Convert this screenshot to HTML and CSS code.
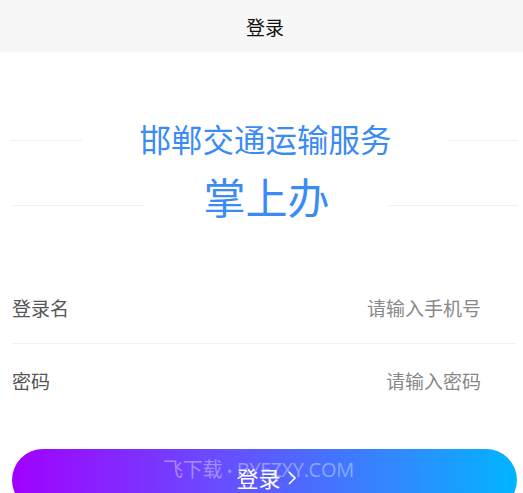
FILE: index.html
```html
<!DOCTYPE html>
<html lang="zh-CN">
<head>
<meta charset="utf-8">
<title>登录</title>
<link rel="stylesheet" href="styles.css">
</head>
<body>
<header class="topbar"><span class="topbar-title">登录</span></header>
<section class="brand">
  <div class="brand-row brand-row-1">
    <span class="deco deco-l1"></span>
    <h1 class="brand-title">邯郸交通运输服务</h1>
    <span class="deco deco-r1"></span>
  </div>
  <div class="brand-row brand-row-2">
    <span class="deco deco-l2"></span>
    <h2 class="brand-sub">掌上办</h2>
    <span class="deco deco-r2"></span>
  </div>
</section>
<form class="form">
  <div class="field field-first">
    <span class="label">登录名</span>
    <span class="placeholder">请输入手机号</span>
  </div>
  <div class="field">
    <span class="label">密码</span>
    <span class="placeholder">请输入密码</span>
  </div>
  <div class="btn-wrap">
    <span class="watermark">飞下载 <span class="dot">•</span> BYFZXY.COM</span>
    <button type="button" class="btn"><span class="btn-text">登录</span><svg class="chev" width="10" height="16" viewBox="0 0 10 16"><path d="M2 2 L8 8 L2 14" fill="none" stroke="#fff" stroke-width="1.6"/></svg></button>
  </div>
</form>
</body>
</html>
```
FILE: styles.css
```css
html, body {
  margin: 0;
  padding: 0;
  background: #ffffff;
  font-family: "Noto Sans CJK SC", "Noto Sans", sans-serif;
  overflow: hidden;
  height: 493px;
}
.topbar {
  height: 52px;
  background: #f7f7f7;
  display: flex;
  align-items: center;
  justify-content: center;
}
.topbar-title {
  font-size: 19px;
  color: #111;
  line-height: 1;
  margin-top: 1px;
  margin-left: 7px;
}
.brand {
  padding-top: 66px;
}
.brand-row {
  display: grid;
  grid-template-columns: 1fr auto 1fr;
  align-items: center;
}
.brand-row-2 {
  margin-top: 13px;
}
.brand-title {
  margin: 0;
  font-weight: normal;
  font-size: 31.5px;
  line-height: 40px;
  color: #3a8bf5;
  padding: 0 4px 0 12px;
}
.brand-sub {
  margin: 0;
  font-weight: normal;
  font-size: 42px;
  line-height: 50px;
  color: #3a8bf5;
  padding: 0 0 0 10px;
}
.deco {
  display: block;
  height: 1px;
  background: #f0f0f0;
}
.deco-l1 { width: 72px; margin-left: 10px; justify-self: start; margin-top: 4px; }
.deco-r1 { width: 70px; margin-right: 5px; justify-self: end; margin-top: 4px; }
.deco-l2 { width: 131px; margin-left: 12px; justify-self: start; margin-top: 18px; }
.deco-r2 { width: 130px; margin-right: 5px; justify-self: end; margin-top: 18px; }
.form {
  margin: 50px 6px 0 12px;
}
.field {
  height: 72px;
  display: flex;
  align-items: center;
  justify-content: space-between;
  font-size: 19px;
  line-height: 1;
}
.field-first {
  border-bottom: 1px solid #f2f2f2;
  height: 72px;
}
.label {
  color: #555;
}
.placeholder {
  color: #888;
  margin-right: 36px;
}
.btn-wrap {
  position: relative;
  margin-top: 33px;
}
.btn {
  display: flex;
  align-items: center;
  justify-content: center;
  width: 100%;
  height: 62px;
  border: none;
  border-radius: 31px;
  background: linear-gradient(90deg, #a100ff 0%, #6a4bff 40%, #2a90ff 80%, #00b5ff 100%);
  color: #fff;
  font-family: "Noto Sans CJK SC", sans-serif;
  font-size: 22px;
  line-height: 1;
  padding: 0 0 6px 0;
}
.btn-text {
  margin-left: 4px;
}
.chev {
  margin-left: 6px;
  margin-top: 1px;
}
.watermark {
  position: absolute;
  left: 151px;
  top: 5px;
  font-family: "Open Sans", "Noto Sans CJK SC", sans-serif;
  font-size: 20px;
  letter-spacing: -0.3px;
  color: rgba(255, 255, 255, 0.38);
  white-space: nowrap;
  pointer-events: none;
}
.dot {
  font-size: 14px;
}
```
